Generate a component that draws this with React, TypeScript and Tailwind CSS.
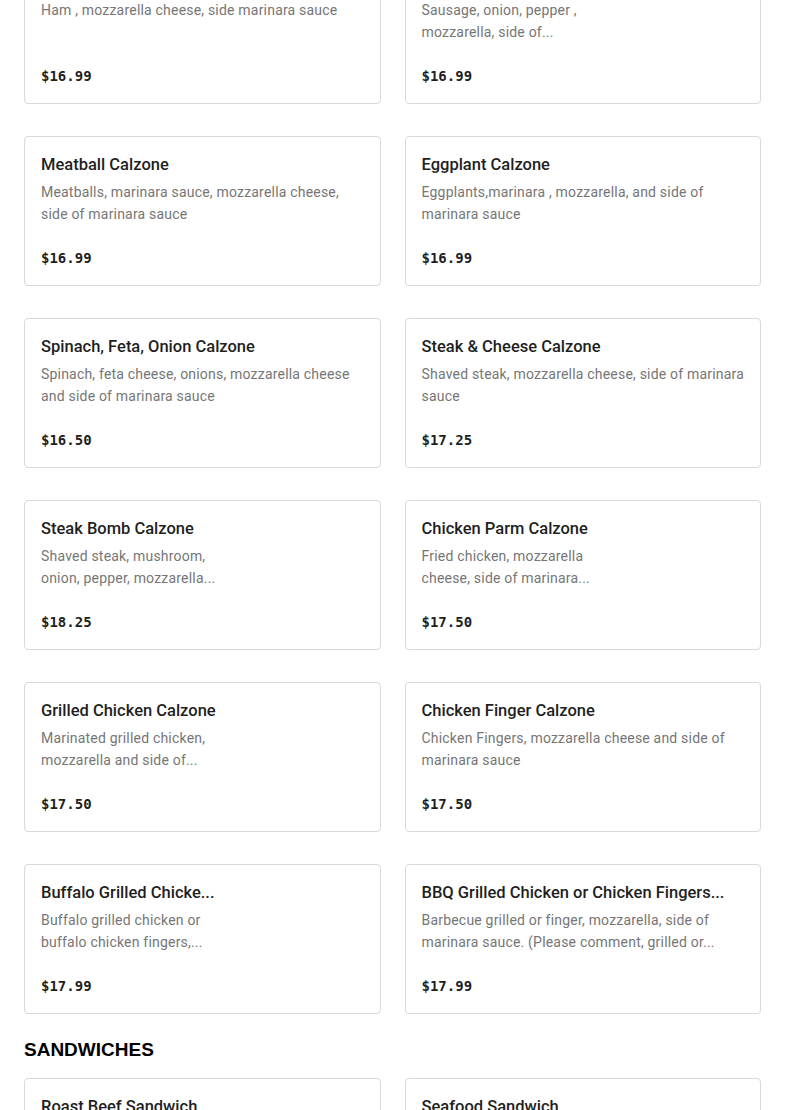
import React from 'react';

type Item = {
  name: string;
  lines: string[];
  price: string;
  narrow?: boolean;
};

const CALZONES: Item[] = [
  { name: 'Ham Calzone', lines: ['Ham , mozzarella cheese, side marinara sauce'], price: '$16.99' },
  { name: 'Sausage Calzone', lines: ['Sausage, onion, pepper ,', 'mozzarella, side of...'], price: '$16.99', narrow: true },
  { name: 'Meatball Calzone', lines: ['Meatballs, marinara sauce, mozzarella cheese,', 'side of marinara sauce'], price: '$16.99' },
  { name: 'Eggplant Calzone', lines: ['Eggplants,marinara , mozzarella, and side of', 'marinara sauce'], price: '$16.99' },
  { name: 'Spinach, Feta, Onion Calzone', lines: ['Spinach, feta cheese, onions, mozzarella cheese', 'and side of marinara sauce'], price: '$16.50' },
  { name: 'Steak & Cheese Calzone', lines: ['Shaved steak, mozzarella cheese, side of marinara', 'sauce'], price: '$17.25' },
  { name: 'Steak Bomb Calzone', lines: ['Shaved steak, mushroom,', 'onion, pepper, mozzarella...'], price: '$18.25', narrow: true },
  { name: 'Chicken Parm Calzone', lines: ['Fried chicken, mozzarella', 'cheese, side of marinara...'], price: '$17.50', narrow: true },
  { name: 'Grilled Chicken Calzone', lines: ['Marinated grilled chicken,', 'mozzarella and side of...'], price: '$17.50', narrow: true },
  { name: 'Chicken Finger Calzone', lines: ['Chicken Fingers, mozzarella cheese and side of', 'marinara sauce'], price: '$17.50' },
  { name: 'Buffalo Grilled Chicke...', lines: ['Buffalo grilled chicken or', 'buffalo chicken fingers,...'], price: '$17.99', narrow: true },
  { name: 'BBQ Grilled Chicken or Chicken Fingers...', lines: ['Barbecue grilled or finger, mozzarella, side of', 'marinara sauce. (Please comment, grilled or...'], price: '$17.99' },
];

const SANDWICHES: Item[] = [
  { name: 'Roast Beef Sandwich', lines: ['Roast beef, lettuce, tomato, mayo'], price: '$11.99' },
  { name: 'Seafood Sandwich', lines: ['Seafood salad, lettuce, tomato'], price: '$13.99' },
];

function MenuCard({ item }: { item: Item }) {
  return (
    <div className="h-[150px] rounded-[4px] border border-[#d9d9d9] bg-white px-4 pt-4 flex flex-col">
      <div className={item.narrow ? 'w-[200px]' : 'w-full'}>
        <h3 className="text-[16.5px] leading-6 font-medium text-[#1f1f1f] whitespace-nowrap overflow-hidden">
          {item.name}
        </h3>
        <div className="mt-1 h-[44px] text-[14px] leading-[22px] text-[#767676] tracking-[0.2px]">
          {item.lines.map((l, i) => (
            <div key={i} className="whitespace-nowrap">
              {l}
            </div>
          ))}
        </div>
      </div>
      <div
        className="mt-[23px] text-[14px] leading-5 font-bold text-[#1f1f1f]"
        style={{ fontFamily: '"DejaVu Sans Mono", "Liberation Mono", monospace' }}
      >
        {item.price}
      </div>
    </div>
  );
}

export default function App() {
  return (
    <div
      className="w-full min-h-screen bg-white overflow-hidden"
      style={{ fontFamily: 'Roboto, "Liberation Sans", sans-serif' }}
    >
      <div className="px-6 -mt-[46px]">
        {/* Calzones */}
        <div className="grid grid-cols-2 gap-x-6 gap-y-8">
          {CALZONES.map((item) => (
            <MenuCard key={item.name} item={item} />
          ))}
        </div>

        {/* Sandwiches */}
        <h2
          className="mt-[25px] mb-[17px] text-[19px] leading-[22px] font-bold text-black"
          style={{ fontFamily: '"Liberation Sans", Arial, sans-serif' }}
        >
          SANDWICHES
        </h2>
        <div className="grid grid-cols-2 gap-x-6 gap-y-8">
          {SANDWICHES.map((item) => (
            <MenuCard key={item.name} item={item} />
          ))}
        </div>
      </div>
    </div>
  );
}
